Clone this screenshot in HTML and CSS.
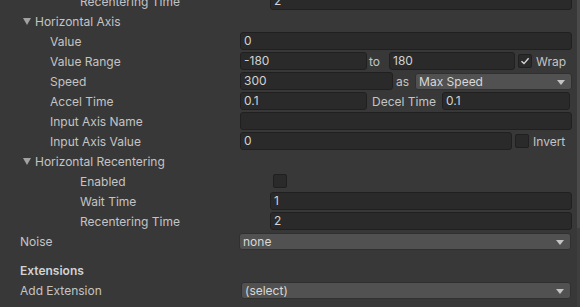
FILE: index.html
```html
<!DOCTYPE html>
<html lang="en">
<head>
<meta charset="UTF-8">
<title>Inspector</title>
<link rel="stylesheet" href="styles.css">
</head>
<body>

<div class="inspector">
    <div class="row">
        <span class="label indent-2">Recentering Time</span>
        <div class="value sub"><div class="field">2</div></div>
    </div>

    <div class="row">
        <span class="label foldout"><i class="arrow"></i>Horizontal Axis</span>
    </div>
    <div class="row">
        <span class="label indent-1">Value</span>
        <div class="value"><div class="field">0</div></div>
    </div>
    <div class="row">
        <span class="label indent-1">Value Range</span>
        <div class="value">
            <div class="field w127">-180</div>
            <span class="inline-label to">to</span>
            <div class="field w126">180</div>
            <span class="check">
                <svg width="12" height="12" viewBox="0 0 12 12"><path d="M2.5 6.2 L5 8.6 L9.6 3.2" fill="none" stroke="#d8d8d8" stroke-width="1.4"/></svg>
            </span>
            <span class="inline-label">Wrap</span>
        </div>
    </div>
    <div class="row">
        <span class="label indent-1">Speed</span>
        <div class="value">
            <div class="field w153">300</div>
            <span class="inline-label as">as</span>
            <div class="dropdown w152">Max Speed</div>
        </div>
    </div>
    <div class="row">
        <span class="label indent-1">Accel Time</span>
        <div class="value">
            <div class="field w127">0.1</div>
            <span class="inline-label decel">Decel Time</span>
            <div class="field w128">0.1</div>
        </div>
    </div>
    <div class="row">
        <span class="label indent-1">Input Axis Name</span>
        <div class="value"><div class="field"></div></div>
    </div>
    <div class="row">
        <span class="label indent-1">Input Axis Value</span>
        <div class="value">
            <div class="field w272">0</div>
            <span class="check"></span>
            <span class="inline-label">Invert</span>
        </div>
    </div>

    <div class="row">
        <span class="label foldout"><i class="arrow"></i>Horizontal Recentering</span>
    </div>
    <div class="row">
        <span class="label indent-2">Enabled</span>
        <div class="value sub"><span class="check"></span></div>
    </div>
    <div class="row">
        <span class="label indent-2">Wait Time</span>
        <div class="value sub"><div class="field">1</div></div>
    </div>
    <div class="row">
        <span class="label indent-2">Recentering Time</span>
        <div class="value sub"><div class="field">2</div></div>
    </div>

    <div class="row">
        <span class="label">Noise</span>
        <div class="value noise"><div class="dropdown full">none</div></div>
    </div>

    <div class="row header">
        <span class="label bold">Extensions</span>
    </div>
    <div class="row">
        <span class="label">Add Extension</span>
        <div class="value ext"><div class="dropdown full">(select)</div></div>
    </div>
</div>

<div class="scrollbar"><div class="thumb"></div></div>

</body>
</html>
```

FILE: styles.css
```css
body {
    margin: 0;
    padding: 0;
    background-color: #383838;
    color: #c4c4c4;
    font-family: Inter, "Noto Sans", sans-serif;
    font-size: 12px;
    overflow: hidden;
}
.inspector {
    margin-top: -9px;
    padding-right: 8px;
}
.row {
    display: flex;
    align-items: center;
    height: 20px;
}
.row.header {
    margin-top: 9px;
}
.label {
    flex: 0 0 240px;
    box-sizing: border-box;
    padding-left: 20px;
    white-space: nowrap;
}
.indent-1 {
    padding-left: 50px;
}
.indent-2 {
    padding-left: 80px;
}
.bold {
    font-weight: 600;
    color: #d2d2d2;
}
.foldout {
    padding-left: 23px;
    display: flex;
    align-items: center;
}
.arrow {
    width: 0;
    height: 0;
    border-left: 4px solid transparent;
    border-right: 4px solid transparent;
    border-top: 7px solid #a2a2a2;
    margin-right: 4px;
    margin-top: 1px;
}
.value {
    flex: 1;
    display: flex;
    align-items: center;
    min-width: 0;
}
.value.sub {
    margin-left: 30px;
}
.value.noise {
    margin-left: -1px;
    margin-right: 1px;
}
.value.ext {
    margin-left: 1px;
    margin-right: 1px;
}
.field {
    flex: 1;
    box-sizing: border-box;
    height: 18px;
    line-height: 16px;
    padding-left: 3px;
    background-color: #2a2a2a;
    border: 1px solid #202020;
    border-radius: 3px;
    color: #d2d2d2;
}
.w127 { flex: 0 0 127px; }
.w126 { flex: 0 0 126px; }
.w128 { flex: 0 0 128px; }
.w153 { flex: 0 0 153px; }
.w152 { flex: 0 0 152px; }
.w272 { flex: 0 0 272px; }
.inline-label {
    white-space: nowrap;
}
.to {
    margin: 0 9px 0 2px;
}
.as {
    margin: 0 6px 0 3px;
}
.decel {
    margin: 0 6px 0 5px;
}
.check {
    flex: 0 0 auto;
    box-sizing: border-box;
    width: 14px;
    height: 14px;
    margin: 0 4px 0 3px;
    background-color: #2a2a2a;
    border: 1px solid #202020;
    border-radius: 2px;
    display: flex;
}
.check svg {
    display: block;
}
.dropdown {
    flex: 1;
    box-sizing: border-box;
    height: 17px;
    line-height: 15px;
    padding-left: 3px;
    background-color: #515151;
    border: 1px solid #303030;
    border-radius: 3px;
    color: #d8d8d8;
    position: relative;
}
.dropdown::after {
    content: "";
    position: absolute;
    right: 6px;
    top: 6px;
    border-left: 4px solid transparent;
    border-right: 4px solid transparent;
    border-top: 5px solid #c4c4c4;
}
.scrollbar {
    position: absolute;
    top: 0;
    right: 0;
    width: 3px;
    height: 307px;
    background-color: #3e3e3e;
}
.thumb {
    height: 228px;
    background-color: #4a4a4a;
}
```
